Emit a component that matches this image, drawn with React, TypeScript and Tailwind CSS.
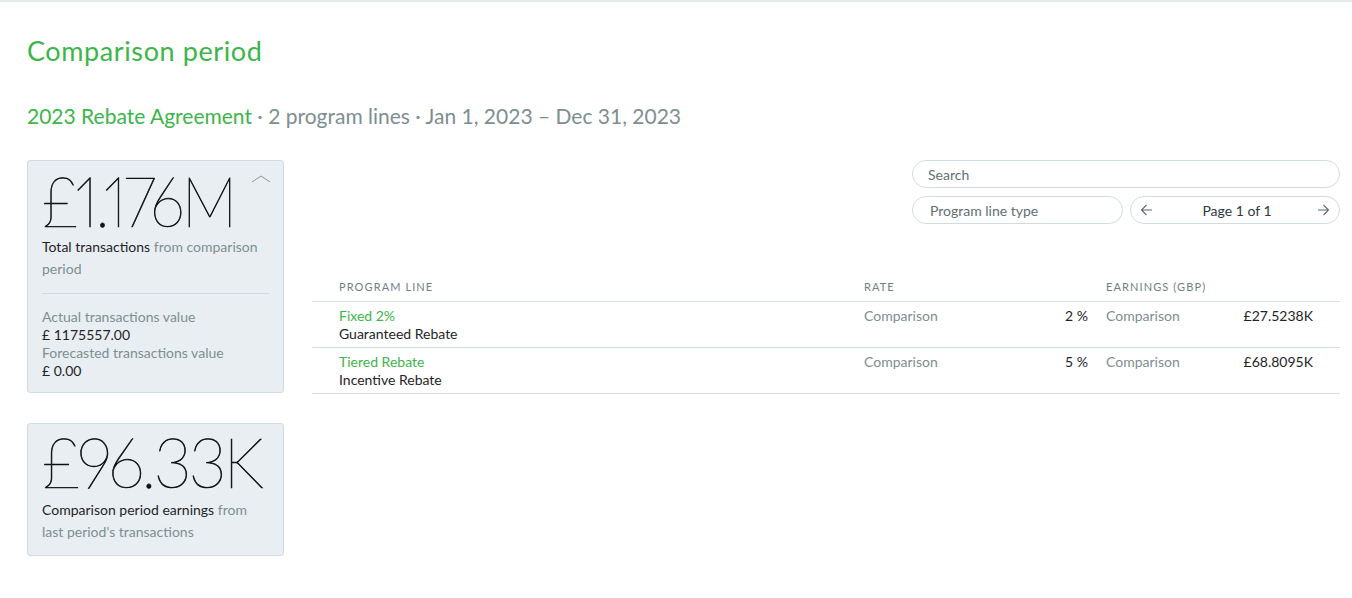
import React from "react";

const green = "text-[#3cb54a]";

function ChevronUp() {
  return (
    <svg width="20" height="8" viewBox="0 0 20 8" fill="none" className="absolute right-[12px] top-[14px]">
      <path d="M1 7 L10 1 L19 7" stroke="#8a979c" strokeWidth="1" />
    </svg>
  );
}

function Arrow({ dir }: { dir: "left" | "right" }) {
  return (
    <svg width="13" height="12" viewBox="0 0 13 12" fill="none">
      {dir === "left" ? (
        <path d="M12 6 H1.5 M6.5 1 L1.5 6 L6.5 11" stroke="#5d6b70" strokeWidth="1.1" />
      ) : (
        <path d="M1 6 H11.5 M6.5 1 L11.5 6 L6.5 11" stroke="#5d6b70" strokeWidth="1.1" />
      )}
    </svg>
  );
}

const rows = [
  { name: "Fixed 2%", type: "Guaranteed Rebate", pct: "2 %", value: "£27.5238K" },
  { name: "Tiered Rebate", type: "Incentive Rebate", pct: "5 %", value: "£68.8095K" },
];

export default function App() {
  return (
    <div className="min-h-[598px] w-[1352px] bg-white font-['Lato',sans-serif] text-[#1e2528] border-t-2 border-[#e4e9eb]">
      <div className="pl-[27px] pr-[12px]">
        <h1 className={`${green} text-[27px] leading-none tracking-[0.6px] pt-[35px] font-normal`}>Comparison period</h1>
        <div className="mt-[41px] text-[21px] leading-[21px] text-[#7d8e91]">
          <span className={green}>2023 Rebate Agreement</span> · 2 program lines · Jan 1, 2023 – Dec 31, 2023
        </div>

        <div className="mt-[34px] flex gap-[28px]">
          <div className="w-[257px] shrink-0 flex flex-col gap-[30px]">
            <div className="relative rounded-[3px] border border-[#d3dbe0] bg-[#e9eef2] px-[14px] pt-[4px] pb-[12px]">
              <ChevronUp />
              <div className="h-[70px]">
                <span className="inline-block origin-left scale-x-[0.89] text-[70px] leading-[70px] font-thin proportional-nums tracking-[-3px] text-[#111] [-webkit-text-stroke:0.7px_#111]">
                  £1.176M
                </span>
              </div>
              <div className="mt-[1px] w-[222px] text-[14px] leading-[22px] text-[#7d8e91]">
                <span className="text-[#1e2528]">Total transactions</span> from comparison period
              </div>
              <div className="mt-[13px] border-t border-[#d3dbe0]" />
              <div className="mt-[14px] text-[14px] leading-[18px]">
                <div className="text-[#7d8e91]">Actual transactions value</div>
                <div>£ 1175557.00</div>
                <div className="text-[#7d8e91]">Forecasted transactions value</div>
                <div>£ 0.00</div>
              </div>
            </div>
            <div className="rounded-[3px] border border-[#d3dbe0] bg-[#e9eef2] px-[14px] pt-[2px] pb-[12px]">
              <div className="h-[70px]">
                <span className="inline-block origin-left scale-x-[0.94] text-[70px] leading-[70px] font-thin proportional-nums tracking-[-3px] text-[#111] [-webkit-text-stroke:0.7px_#111]">
                  £96.33K
                </span>
              </div>
              <div className="mt-[3px] w-[222px] text-[14px] leading-[22px] text-[#7d8e91]">
                <span className="text-[#1e2528]">Comparison period earnings</span> from last period's transactions
              </div>
            </div>
          </div>

          <div className="flex-1">
            <div className="flex justify-end">
              <div className="w-[428px] flex flex-col gap-[8px]">
                <div className="h-[28px] rounded-full border border-[#d3dbe0] px-[15px] flex items-center text-[14px] text-[#5f7074]">
                  Search
                </div>
                <div className="flex gap-[7px]">
                  <div className="h-[28px] w-[211px] rounded-full border border-[#d3dbe0] px-[17px] flex items-center text-[14px] text-[#5f7074]">
                    Program line type
                  </div>
                  <div className="h-[28px] flex-1 rounded-full border border-[#d3dbe0] px-[9px] flex items-center justify-between text-[14px] text-[#2b3a40]">
                    <Arrow dir="left" />
                    <span className="pl-[4px]">Page 1 of 1</span>
                    <Arrow dir="right" />
                  </div>
                </div>
              </div>
            </div>

            <div className="mt-[56px] text-[14px]">
              <div className="grid grid-cols-[27px_525px_140px_84px_18px_120px_87px_27px] border-b border-[#d9e0e3] pb-[7px] text-[11px] leading-[14px] tracking-[1.1px] uppercase text-[#6f7f83]">
                <div />
                <div>Program line</div>
                <div className="col-span-3">Rate</div>
                <div className="col-span-2">Earnings (GBP)</div>
                <div />
              </div>
              {rows.map((r) => (
                <div
                  key={r.name}
                  className="grid grid-cols-[27px_525px_140px_84px_18px_120px_87px_27px] border-b border-[#d9e0e3] pt-[5px] pb-[4px] leading-[18px]"
                >
                  <div />
                  <div>
                    <div className={green}>{r.name}</div>
                    <div>{r.type}</div>
                  </div>
                  <div className="text-[#7d8e91]">Comparison</div>
                  <div className="text-right">{r.pct}</div>
                  <div />
                  <div className="text-[#7d8e91]">Comparison</div>
                  <div className="text-right">{r.value}</div>
                  <div />
                </div>
              ))}
            </div>
          </div>
        </div>
      </div>
    </div>
  );
}
